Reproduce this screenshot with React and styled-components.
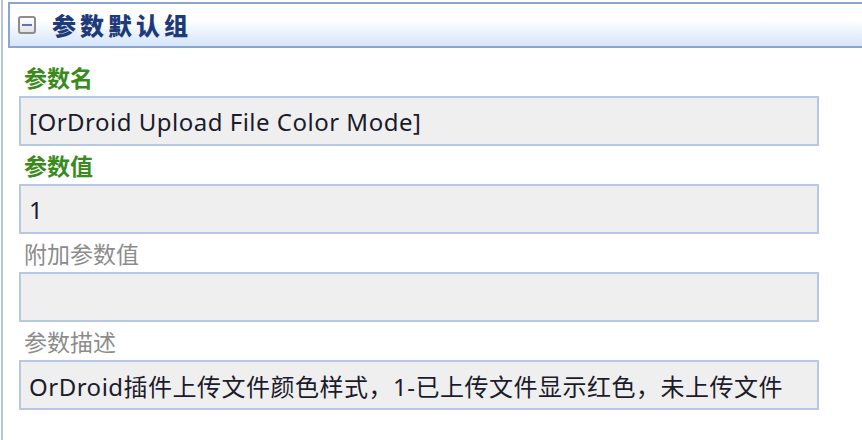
import React from "react";
import styled, { createGlobalStyle } from "styled-components";

const Global = createGlobalStyle`
  html, body { margin: 0; padding: 0; background: #ffffff; }
  body { font-family: "Noto Sans", "Noto Sans CJK SC", sans-serif; }
`;

const Page = styled.div`
  width: 862px;
  height: 440px;
  box-sizing: border-box;
  overflow: hidden;
  border-left: 2px solid #b4c4de;
  margin-left: 1px;
  padding: 2px 0 0 5px;
  background: #ffffff;
`;

const GroupHeader = styled.div`
  display: flex;
  align-items: center;
  gap: 16px;
  height: 42px;
  box-sizing: content-box;
  margin-right: -10px;
  border: 2px solid #8aa5d3;
  border-right: none;
  padding-left: 8px;
  background: linear-gradient(to bottom, #ffffff 0%, #ffffff 38%, #d5e5fb 100%);
`;

const ToggleBox = styled.div`
  width: 14px;
  height: 14px;
  border: 2px solid #8d8d8d;
  border-radius: 3px;
  background: linear-gradient(to bottom, #ffffff, #e2e2e2);
  display: flex;
  align-items: center;
  justify-content: center;
`;

const Minus = styled.div`
  width: 10px;
  height: 2px;
  background: #5f74aa;
`;

const GroupTitle = styled.div`
  font-family: "Noto Sans CJK SC", sans-serif;
  font-weight: 900;
  font-size: 24px;
  letter-spacing: 4px;
  color: #1d3a7b;
  line-height: 1;
`;

const Body = styled.div`
  display: flex;
  flex-direction: column;
  padding: 16px 0 0 11px;
  width: 800px;
`;

const Label = styled.div`
  font-family: "Noto Sans CJK SC", sans-serif;
  font-size: 23px;
  line-height: 26px;
  height: 32px;
  padding-left: 5px;
  font-weight: ${(p) => (p.$strong ? 700 : 400)};
  color: ${(p) => (p.$strong ? "#3a8a1c" : "#8c8c8c")};
`;

const Field = styled.div`
  height: 46px;
  box-sizing: content-box;
  border: 2px solid #b8c8e2;
  background: #efefef;
  display: flex;
  align-items: center;
  padding-left: 8px;
  margin-bottom: 6px;
  font-family: "Noto Sans", "Noto Sans CJK SC", sans-serif;
  font-size: 24px;
  letter-spacing: 0.5px;
  color: #1b1b2b;
  white-space: nowrap;
  overflow: hidden;
`;

const fields = [
  { label: "参数名", strong: true, value: "[OrDroid Upload File Color Mode]" },
  { label: "参数值", strong: true, value: "1" },
  { label: "附加参数值", strong: false, value: "" },
  {
    label: "参数描述",
    strong: false,
    value: "OrDroid插件上传文件颜色样式，1-已上传文件显示红色，未上传文件",
  },
];

export default function App() {
  return (
    <>
      <Global />
      <Page>
        <GroupHeader>
          <ToggleBox>
            <Minus />
          </ToggleBox>
          <GroupTitle>参数默认组</GroupTitle>
        </GroupHeader>
        <Body>
          {fields.map((f) => (
            <React.Fragment key={f.label}>
              <Label $strong={f.strong}>{f.label}</Label>
              <Field>{f.value}</Field>
            </React.Fragment>
          ))}
        </Body>
      </Page>
    </>
  );
}
